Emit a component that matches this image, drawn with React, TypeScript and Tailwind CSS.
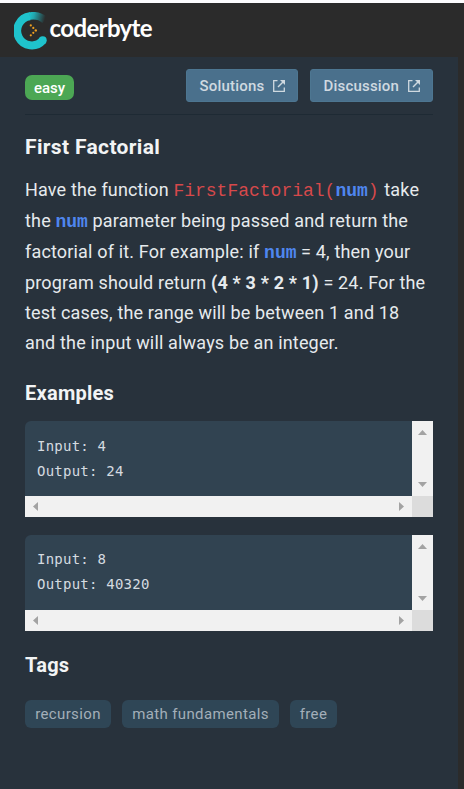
import type { ReactNode } from "react";

function Logo() {
  return (
    <div className="flex h-[54px] items-start bg-[#2b2b2b] pl-3.5 pt-[9px]">
      <svg width="34" height="38" viewBox="0 0 34 38" className="shrink-0">
        <defs>
          <linearGradient id="arc" gradientUnits="userSpaceOnUse" x1="15" y1="3" x2="31" y2="7">
            <stop offset="0" stopColor="#1fc3cc" />
            <stop offset="0.3" stopColor="#22a5ad" />
            <stop offset="1" stopColor="#2b2b2b" />
          </linearGradient>
        </defs>
        <path d="M15.500 4.100C22 3 27 4.500 31 8.300" fill="none" stroke="url(#arc)" strokeWidth="7.600" />
        <path d="M16 4.300A14.600 14.600 0 1 0 28.700 28.500" fill="none" stroke="#1fc3cc" strokeWidth="8" />
        <circle cx="28.700" cy="28.300" r="4" fill="#1fc3cc" />
        <g fill="#f0a020">
          <circle cx="16.800" cy="13.400" r="1.100" />
          <circle cx="19.300" cy="15.900" r="1.100" />
          <circle cx="21.800" cy="18.400" r="1.200" />
          <circle cx="19.300" cy="20.800" r="1.100" />
          <circle cx="16.800" cy="23.300" r="1.100" />
        </g>
      </svg>
      <span className="-mt-[5px] ml-[1.500px] whitespace-nowrap font-['Lato',sans-serif] text-[24px] font-bold leading-[42px] tracking-[-0.620px] text-white">
        coderbyte
      </span>
    </div>
  );
}

function LinkButton({ children, className }: { children: ReactNode; className: string }) {
  return (
    <button className={"flex h-[33px] items-center justify-between rounded-[3px] border border-[#4d7691] bg-[#4a708c] pl-[12.500px] pr-[11.500px] text-[15px] font-medium leading-[31px] tracking-[0.2px] text-[#cfd9e0] " + className}>
      <span className="pt-px">{children}</span>
      <svg width="14" height="14" viewBox="0 0 14 14" fill="none" stroke="currentColor" strokeWidth="1.300">
        <path d="M5.500 1.700H1.700v10.600h10.600V8.500" />
        <path d="M6 8l5.500-5.500" strokeWidth="1.500" />
        <path d="M8 1h5v5z" fill="currentColor" stroke="none" />
      </svg>
    </button>
  );
}

function Num() {
  return <b className="font-['Courier_New','Liberation_Mono',monospace] text-[18px] font-bold leading-none tracking-normal text-[#4f86ee]">num</b>;
}

function Line({ children, className }: { children: ReactNode; className: string }) {
  return <div className={"whitespace-nowrap " + className}>{children}</div>;
}

function Example({ input, output, className }: { input: string; output: string; className: string }) {
  return (
    <div className="grid h-24 grid-cols-[387px_21px] grid-rows-[75px_21px] overflow-hidden rounded-tl-[6px]">
      <pre className={"bg-[#314351] pl-3 font-['DejaVu_Sans_Mono',monospace] text-[14px] leading-[25px] tracking-[0.230px] text-[#d5dbe0] " + className}>
        {"Input: " + input + "\nOutput: " + output}
      </pre>
      <div className="flex flex-col items-center justify-between bg-[#f1f1f1] py-[9px]">
        <svg width="9" height="5" viewBox="0 0 9 5" fill="#a3a3a3"><path d="M0 5L4.500 0L9 5z" /></svg>
        <svg width="9" height="5" viewBox="0 0 9 5" fill="#a3a3a3"><path d="M0 0L4.500 5L9 0z" /></svg>
      </div>
      <div className="flex items-center justify-between bg-[#f1f1f1] px-2">
        <svg width="5" height="9" viewBox="0 0 5 9" fill="#a3a3a3"><path d="M5 0L0 4.500L5 9z" /></svg>
        <svg width="5" height="9" viewBox="0 0 5 9" fill="#a3a3a3"><path d="M0 0L5 4.500L0 9z" /></svg>
      </div>
      <div className="bg-[#dcdcdc]" />
    </div>
  );
}

function Tag({ children, className }: { children: ReactNode; className: string }) {
  return (
    <span className={"flex h-7 items-center justify-center whitespace-nowrap rounded-[6px] bg-[#2f4656] text-[15px] tracking-[0.360px] text-[#a3afb9] " + className}>
      {children}
    </span>
  );
}

export default function App() {
  return (
    <div className="h-[789px] w-[464px] overflow-hidden bg-[#2b2b2b] font-['Roboto',sans-serif]">
      <div className="h-[3px] bg-[#fcfcfe]" />
      <Logo />
      <main className="h-[732px] w-[458px] bg-[#28323c] px-[25px] pt-3">
        <div className="flex h-[46px] items-start border-b border-[#1e2a34]">
          <span className="mt-[6px] flex h-[25px] w-[49px] items-center justify-center rounded-[7px] bg-[#4ca754] pt-px text-[15px] font-medium text-white">easy</span>
          <div className="ml-auto flex gap-3">
            <LinkButton className="w-[112px]">Solutions</LinkButton>
            <LinkButton className="w-[123px]">Discussion</LinkButton>
          </div>
        </div>
        <h1 className="mt-[17px] text-[21px] font-bold leading-[30px] tracking-[0.350px] text-[#f2f4f5]">First Factorial</h1>
        <div className="mt-3 text-[18px] leading-[31px] tracking-[0.165px] text-[#e6eaed]">
          <Line className="h-[31px]">
            Have the function{" "}
            <span className="mr-px font-['Courier_New','Liberation_Mono',monospace] text-[18px] leading-none tracking-normal text-[#d6494b]">
              FirstFactorial(<Num />)
            </span>{" "}
            take
          </Line>
          <Line className="h-[31px]">the <Num /> parameter being passed and return the</Line>
          <Line className="h-[31px]">factorial of it. For example: if <Num /> = 4, then your</Line>
          <Line className="h-[31px]">program should return <b>(4 * 3 * 2 * 1)</b> = 24. For the</Line>
          <Line className="h-[30px] leading-[29px]">test cases, the range will be between 1 and 18</Line>
          <Line className="h-[30px] leading-[29px]">and the input will always be an integer.</Line>
        </div>
        <h2 className="mt-5 text-[20px] font-bold leading-[30px] tracking-[0.250px] text-[#f2f4f5]">Examples</h2>
        <div className="mt-[13px] flex flex-col gap-[18px]">
          <Example input="4" output="24" className="pt-[13px]" />
          <Example input="8" output="40320" className="pt-3" />
        </div>
        <h2 className="mt-[19px] text-[20px] font-bold leading-[30px] tracking-[0.250px] text-[#f2f4f5]">Tags</h2>
        <div className="mt-5 flex gap-[11px]">
          <Tag className="w-[86px]">recursion</Tag>
          <Tag className="w-[157px]">math fundamentals</Tag>
          <Tag className="w-[47px]">free</Tag>
        </div>
      </main>
    </div>
  );
}
